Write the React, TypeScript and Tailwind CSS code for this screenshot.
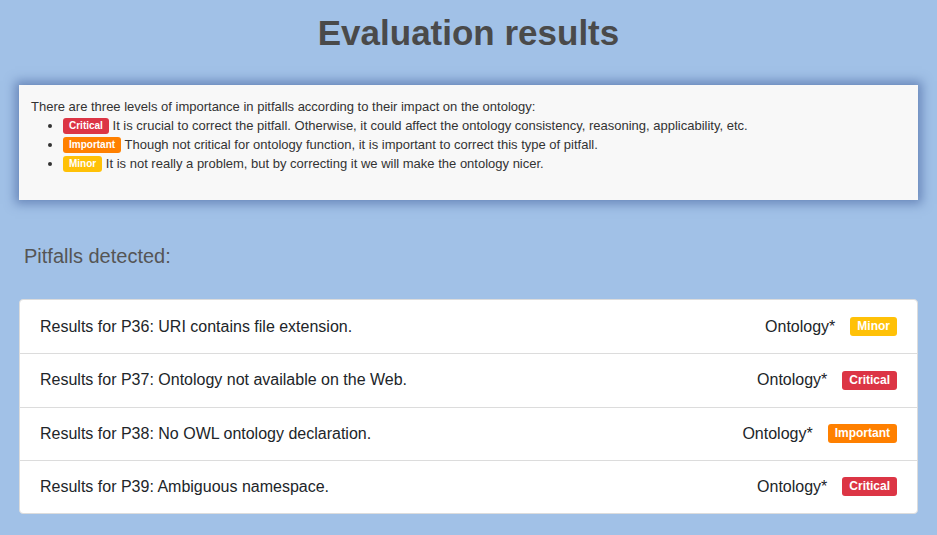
const levels = [
  {
    label: "Critical",
    color: "bg-[#dc3545]",
    text: "It is crucial to correct the pitfall. Otherwise, it could affect the ontology consistency, reasoning, applicability, etc.",
  },
  {
    label: "Important",
    color: "bg-[#ff8000]",
    text: "Though not critical for ontology function, it is important to correct this type of pitfall.",
  },
  {
    label: "Minor",
    color: "bg-[#ffc107]",
    text: "It is not really a problem, but by correcting it we will make the ontology nicer.",
  },
];

const badgeColor: { [key: string]: string } = {
  Critical: "bg-[#dc3545]",
  Important: "bg-[#ff8000]",
  Minor: "bg-[#ffc107]",
};

const pitfalls = [
  { code: "P36", title: "URI contains file extension.", level: "Minor" },
  { code: "P37", title: "Ontology not available on the Web.", level: "Critical" },
  { code: "P38", title: "No OWL ontology declaration.", level: "Important" },
  { code: "P39", title: "Ambiguous namespace.", level: "Critical" },
];

const App = () => {
  return (
    <div className="min-h-[535px] bg-[#a1c1e7] px-[19px] pb-[22px] font-['Liberation_Sans',Arial,sans-serif]">
      {/* Title */}
      <h1 className="pt-[12px] text-center text-[35px] font-bold leading-[42px] text-[#4a4a4a]">
        Evaluation results
      </h1>

      {/* Legend box */}
      <div className="mt-[31px] h-[115px] bg-[#f8f8f8] px-[12px] pt-[12px] text-[13px] leading-[19px] text-[#333] shadow-[0_0_10px_4px_rgba(60,90,150,0.55)]">
        <p>There are three levels of importance in pitfalls according to their impact on the ontology:</p>
        <ul className="list-disc pl-[32px]">
          {levels.map((l) => (
            <li key={l.label}>
              <span
                className={`${l.color} inline-block rounded-[3px] px-[6px] align-[1px] text-[10px] font-bold leading-[16px] text-white`}
              >
                {l.label}
              </span>{" "}
              {l.text}
            </li>
          ))}
        </ul>
      </div>

      {/* Pitfalls */}
      <h2 className="mt-[44px] pl-[5px] text-[20px] leading-[24px] text-[#555]">Pitfalls detected:</h2>

      <div className="mt-[31px] overflow-hidden rounded-[4px] border border-[#dcdcdc] bg-white">
        {pitfalls.map((p, i) => (
          <div
            key={p.code}
            className={`flex h-[53.25px] items-center justify-between px-[20px] text-[16px] text-[#212529] ${
              i > 0 ? "border-t border-[#dcdcdc]" : ""
            }`}
          >
            <span>
              Results for {p.code}: {p.title}
            </span>
            <div className="flex items-center gap-[15px]">
              <span>Ontology*</span>
              <span
                className={`${badgeColor[p.level]} rounded-[3px] px-[7px] text-[12px] font-bold leading-[19px] text-white`}
              >
                {p.level}
              </span>
            </div>
          </div>
        ))}
      </div>
    </div>
  );
};

export default App;
